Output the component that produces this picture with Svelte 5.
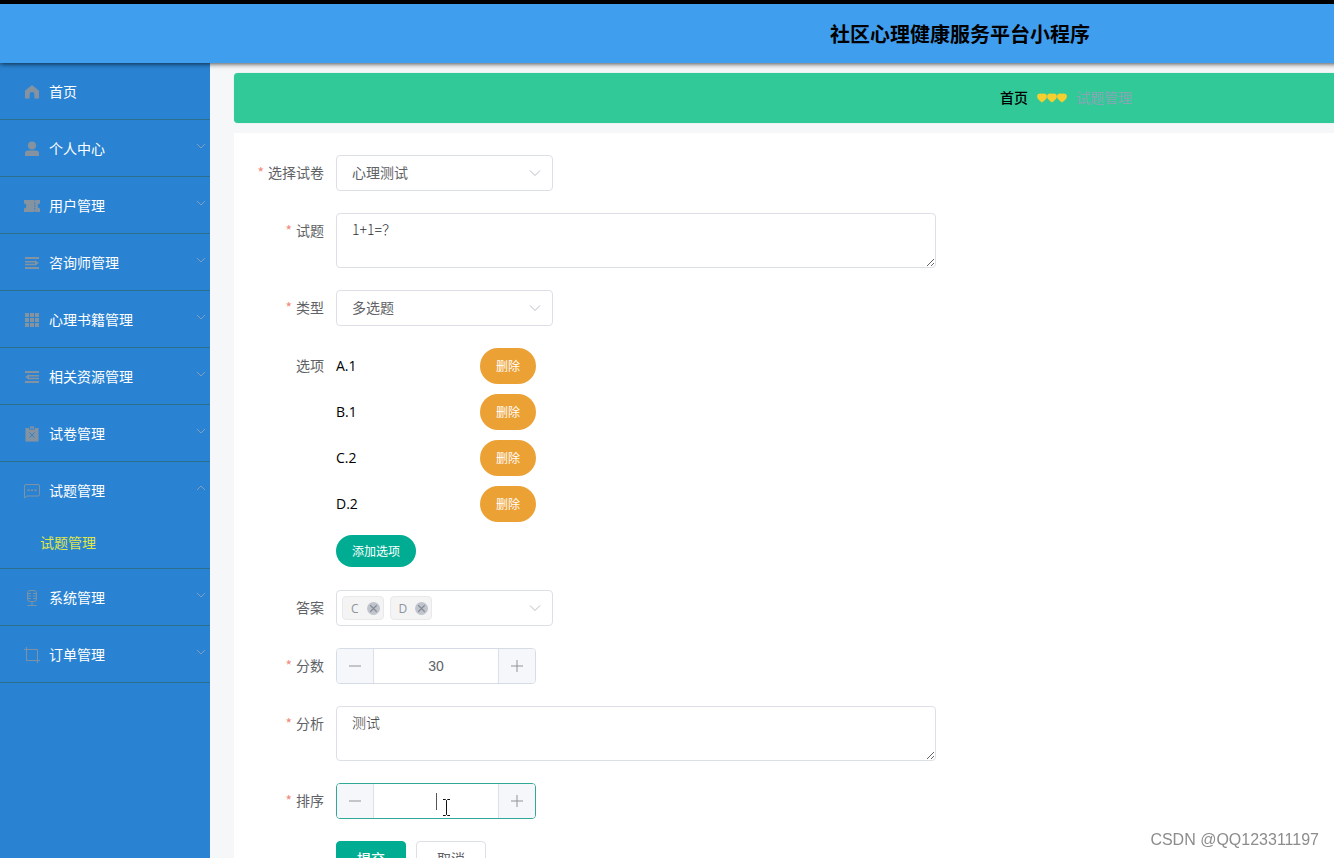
<script lang="ts">
  type MenuItem = {
    icon: string
    label: string
    open?: boolean
    children?: string[]
  }

  const menu: MenuItem[] = [
    { icon: 'home', label: '首页' },
    { icon: 'user', label: '个人中心', children: [] },
    { icon: 'ticket', label: '用户管理', children: [] },
    { icon: 'unfold', label: '咨询师管理', children: [] },
    { icon: 'grid', label: '心理书籍管理', children: [] },
    { icon: 'fold', label: '相关资源管理', children: [] },
    { icon: 'release', label: '试卷管理', children: [] },
    { icon: 'chat', label: '试题管理', open: true, children: ['试题管理'] },
    { icon: 'mic', label: '系统管理', children: [] },
    { icon: 'crop', label: '订单管理', children: [] }
  ]

  let paper = $state('心理测试')
  let question = $state('1+1=？')
  let type = $state('多选题')
  let options = $state(['1', '1', '2', '2'])
  let answers = $state(['C', 'D'])
  let score = $state('30')
  let analysis = $state('测试')
  let sort = $state('')

  const letter = (index: number) => String.fromCharCode(65 + index)
  const step = (value: string, by: number) => String(Math.max(0, Number(value) + by))
</script>

{#snippet chevron()}
  <svg class="chevron" viewBox="0 0 14 14" aria-hidden="true">
    <path d="M2 4.5 7 9.5 12 4.5" />
  </svg>
{/snippet}

{#snippet menuIcon(name: string)}
  <svg class="menu-icon" viewBox="0 0 16 16" aria-hidden="true">
    {#if name === 'home'}
      <path d="M8 1 15 6.8V14.6H10.4V10.4a2.4 2.4 0 0 0-4.8 0v4.2H1V6.8z" />
    {:else if name === 'user'}
      <circle cx="8" cy="4.6" r="4" />
      <path d="M1 15v-2.4A3 3 0 0 1 4 9.6h8a3 3 0 0 1 3 3V15z" />
    {:else if name === 'ticket'}
      <path d="M0 2h10l.8 1 .8-1H16v3.6a2.4 2.4 0 0 0 0 4.8V14h-4.4l-.8-1-.8 1H0v-3.6a2.4 2.4 0 0 0 0-4.8z" />
      <path class="cut" d="M10.8 4.4v1.8M10.8 7.1v1.8M10.8 9.8v1.8" />
    {:else if name === 'unfold'}
      <path d="M1 2h14v2H1zM1 6h10v1.4H1zM1 8.8h10v1.4H1zM1 12h14v2H1zM11 5.2 14.8 8 11 10.8z" />
    {:else if name === 'fold'}
      <path d="M1 2h14v2H1zM5 6h10v1.4H5zM5 8.8h10v1.4H5zM1 12h14v2H1zM5 5.2 1.2 8 5 10.8z" />
    {:else if name === 'grid'}
      <path d="M1 1h4v4H1zM6 1h4v4H6zM11 1h4v4h-4zM1 6h4v4H1zM6 6h4v4H6zM11 6h4v4h-4zM1 11h4v4H1zM6 11h4v4H6zM11 11h4v4h-4z" />
    {:else if name === 'release'}
      <path d="M1.5 2H5v1.4h6V2h3.5v13.4h-13zM5.8.6h4.4v1.8H5.8z" />
      <path class="cut" d="m5.4 6.4 5.2 5.4M10.6 6.4l-5.2 5.4" />
    {:else if name === 'chat'}
      <path class="line" d="M.5 15V3A1.5 1.5 0 0 1 2 1.5h12A1.5 1.5 0 0 1 15.500 3v8.500A1.500 1.500 0 0 1 14 13H3z" />
      <path d="M3.500 6.500h2v1.500h-2zM7 6.500h2v1.500H7zM10.500 6.500h2v1.500h-2z" />
    {:else if name === 'mic'}
      <rect class="line" x="3.500" y=".5" width="9" height="11" rx="2.500" />
      <path class="line" d="M4 3.500h3M9 3.500h3M4 6h3M9 6h3M4 8.500h3M9 8.500h3M8 11.500v4M3.500 15.500h9" />
    {:else if name === 'crop'}
      <path class="line" d="M2.500 0v13.500H16M0 2.500h13.500V16" />
    {/if}
  </svg>
{/snippet}

{#snippet stepper(id: string, value: string, change: (value: string) => void, focused: boolean)}
  <div class="stepper" class:focused>
    <button type="button" aria-label="减少" onclick={() => change(step(value, -1))}>
      <svg viewBox="0 0 14 14" aria-hidden="true"><path d="M1 7h12" /></svg>
    </button>
    <div class="stepper-field">
      <input {id} type="text" inputmode="numeric" {value} oninput={(e) => change(e.currentTarget.value)} />
      {#if focused}
        <span class="caret"></span>
        <svg class="pointer" viewBox="0 0 9 17" aria-hidden="true">
          <path d="M1 .5h2.500l1 1 1-1H8M4.500 1.500v14M1 16.500h2.500l1-1 1 1H8" />
        </svg>
      {/if}
    </div>
    <button type="button" aria-label="增加" onclick={() => change(step(value, 1))}>
      <svg viewBox="0 0 14 14" aria-hidden="true"><path d="M1 7h12M7 1v12" /></svg>
    </button>
  </div>
{/snippet}

<div class="viewport">
  <div class="page">
    <header class="topbar">
      <h1>社区心理健康服务平台小程序</h1>
    </header>

    <div class="body">
      <nav class="sidebar" aria-label="主菜单">
        <ul>
          {#each menu as item}
            <li>
              <a class="menu-item" href="#menu">
                {@render menuIcon(item.icon)}
                <span>{item.label}</span>
                {#if item.children}
                  <svg class="menu-arrow" class:up={item.open} viewBox="0 0 12 12" aria-hidden="true">
                    <path d="M2 4 6 8 10 4" />
                  </svg>
                {/if}
              </a>
              {#if item.open}
                {#each item.children ?? [] as child}
                  <a class="submenu-item" href="#menu">{child}</a>
                {/each}
              {/if}
            </li>
          {/each}
        </ul>
      </nav>

      <main>
        <div class="breadcrumb">
          <a href="#home">首页</a>
          <svg class="hearts" viewBox="0 0 30 10" aria-hidden="true">
            {#each [0, 10, 20] as x}
              <path d="M{x + 5} 9.600C{x + 3.6} 8.200 {x + 0.1} 6.600 {x + 0.1} 3.300 {x + 0.1} .4 {x + 3.8} .2 {x + 5} 1 {x + 6.2} .2 {x + 9.9} .4 {x + 9.9} 3.300 {x + 9.9} 6.600 {x + 6.4} 8.200 {x + 5} 9.600z" />
            {/each}
          </svg>
          <span>试题管理</span>
        </div>

        <form class="card">
          <div class="row">
            <label class="required" for="paper">选择试卷</label>
            <div class="select">
              <select id="paper" bind:value={paper}>
                <option>心理测试</option>
              </select>
              {@render chevron()}
            </div>
          </div>

          <div class="row">
            <label class="required" for="question">试题</label>
            <textarea id="question" bind:value={question}></textarea>
          </div>

          <div class="row">
            <label class="required" for="type">类型</label>
            <div class="select">
              <select id="type" bind:value={type}>
                <option>单选题</option>
                <option>多选题</option>
              </select>
              {@render chevron()}
            </div>
          </div>

          <div class="row">
            <span class="label">选项</span>
            <div class="options">
              {#each options as option, index}
                <div class="option">
                  <span>{letter(index)}.{option}</span>
                  <button type="button" class="pill warning" onclick={() => options.splice(index, 1)}>删除</button>
                </div>
              {/each}
              <div class="option-add">
                <button type="button" class="pill primary" onclick={() => options.push('')}>添加选项</button>
              </div>
            </div>
          </div>

          <div class="row">
            <span class="label">答案</span>
            <div class="select tags">
              {#each answers as answer}
                <span class="tag">
                  {answer}
                  <button type="button" aria-label="移除 {answer}" onclick={() => (answers = answers.filter((a) => a !== answer))}>
                    <svg viewBox="0 0 12 12" aria-hidden="true"><path d="m3 3 6 6M9 3 3 9" /></svg>
                  </button>
                </span>
              {/each}
              {@render chevron()}
            </div>
          </div>

          <div class="row">
            <label class="required" for="score">分数</label>
            {@render stepper('score', score, (v) => (score = v), false)}
          </div>

          <div class="row">
            <label class="required" for="analysis">分析</label>
            <textarea id="analysis" bind:value={analysis}></textarea>
          </div>

          <div class="row">
            <label class="required" for="sort">排序</label>
            {@render stepper('sort', sort, (v) => (sort = v), true)}
          </div>

          <div class="row">
            <span class="label"></span>
            <div class="actions">
              <button type="button" class="action submit">提交</button>
              <button type="button" class="action">取消</button>
            </div>
          </div>
        </form>
      </main>
    </div>
  </div>

  <div class="watermark">CSDN @QQ123311197</div>
</div>

<style>
  :global(body) {
    background: #f5f7f9;
    font-family: 'Noto Sans CJK SC', sans-serif;
    font-size: 14px;
  }

  .viewport {
    height: 100vh;
    overflow: hidden;
  }

  .page {
    display: flex;
    flex-direction: column;
    min-width: 1920px;
    min-height: 100%;
    box-sizing: border-box;
    border-top: 4px solid #000;
  }

  .topbar {
    display: flex;
    align-items: center;
    justify-content: center;
    height: 59px;
    background: #409eef;
    box-shadow: 0 1px 5px rgba(0, 0, 0, 0.7);
    z-index: 1;
  }

  h1 {
    margin: 0;
    color: #000;
    font-size: 20px;
    font-weight: 700;
    line-height: 30px;
  }

  .body {
    display: flex;
    flex: 1;
  }

  .sidebar {
    flex: 0 0 210px;
    background: #2a83d2;
  }

  .sidebar ul {
    margin: 0;
    padding: 0;
    list-style: none;
  }

  .sidebar li {
    border-bottom: 1px solid #2a6f8c;
  }

  .menu-item {
    display: flex;
    align-items: center;
    gap: 9px;
    height: 56px;
    padding: 0 4px 0 24px;
    color: #fff;
    text-decoration: none;
  }

  .menu-item span {
    padding-bottom: 1px;
  }

  .menu-icon {
    width: 16px;
    height: 16px;
    margin-top: 2px;
    fill: #8593a0;
  }

  .menu-icon .line {
    fill: none;
    stroke: #7e92a6;
  }

  .menu-icon .cut {
    fill: none;
    stroke: #2a83d2;
  }

  .menu-arrow {
    width: 12px;
    height: 12px;
    margin: 0 -1px 4px auto;
    fill: none;
    stroke: #7f9fbc;
  }

  .menu-arrow.up {
    transform: rotate(180deg);
  }

  .submenu-item {
    display: block;
    padding: 0 0 2px 40px;
    color: #dfe64a;
    line-height: 48px;
    text-decoration: none;
  }

  main {
    display: flex;
    flex: 1;
    flex-direction: column;
    gap: 10px;
    padding: 10px 0 0 24px;
  }

  .breadcrumb {
    display: flex;
    align-items: center;
    justify-content: center;
    gap: 9px;
    height: 50px;
    padding-right: 22px;
    border-radius: 4px;
    background: #32c998;
    box-shadow: 0 0 1px #7fd9bb;
  }

  .breadcrumb a {
    padding-bottom: 2px;
    color: #000;
    font-weight: 500;
    text-decoration: none;
  }

  .breadcrumb span {
    padding-bottom: 2px;
    color: #86a6b4;
  }

  .hearts {
    width: 30px;
    height: 10px;
    fill: #f5cf2f;
  }

  .card {
    display: flex;
    flex: 1;
    flex-direction: column;
    gap: 22px;
    padding: 22px;
    background: #fff;
  }

  .row {
    display: flex;
    align-items: flex-start;
  }

  label,
  .label {
    flex: 0 0 80px;
    box-sizing: border-box;
    padding-right: 12px;
    color: #606266;
    line-height: 34px;
    text-align: right;
    white-space: nowrap;
  }

  .required::before {
    margin-right: 4px;
    color: #f08a7c;
    content: '*';
  }

  select,
  textarea,
  input,
  button {
    font-family: inherit;
    font-size: 14px;
  }

  .select {
    display: flex;
    align-items: center;
    position: relative;
    box-sizing: border-box;
    width: 217px;
    height: 36px;
    border: 1px solid #dcdfe6;
    border-radius: 4px;
    background: #fff;
  }

  select {
    width: 100%;
    height: 100%;
    padding: 0 30px 2px 15px;
    border: 0;
    border-radius: 4px;
    outline: 0;
    appearance: none;
    background: none;
    color: #606266;
  }

  .chevron {
    position: absolute;
    right: 10px;
    width: 14px;
    height: 14px;
    fill: none;
    stroke: #b9bdc5;
    pointer-events: none;
  }

  textarea {
    box-sizing: border-box;
    width: 600px;
    height: 55px;
    padding: 5px 15px;
    border: 1px solid #dcdfe6;
    border-radius: 4px;
    outline: 0;
    color: #303133;
    font-weight: 300;
    line-height: 21px;
    resize: vertical;
  }

  .option {
    display: flex;
    align-items: center;
    justify-content: space-between;
    width: 200px;
    height: 36px;
    margin-bottom: 10px;
    color: #000;
    font-family: 'Open Sans', 'Noto Sans CJK SC', sans-serif;
  }

  .option span {
    padding-bottom: 2px;
  }

  .option-add {
    display: flex;
    align-items: flex-end;
    height: 35px;
    padding-bottom: 1px;
  }

  .pill {
    height: 32px;
    padding: 0 16px 2px;
    border: 0;
    border-radius: 18px;
    color: #fff;
    font-family: 'Noto Sans CJK SC', sans-serif;
    font-size: 12px;
  }

  .warning {
    height: 36px;
    background: #eca135;
  }

  .primary {
    background: #00ad92;
  }

  .tags {
    gap: 6px;
    padding-left: 5px;
  }

  .tag {
    display: flex;
    align-items: center;
    gap: 8px;
    box-sizing: border-box;
    height: 24px;
    padding: 0 3px 0 8px;
    border: 1px solid #e9e9eb;
    border-radius: 4px;
    background: #f4f4f5;
    color: #909399;
    font-family: 'Open Sans', sans-serif;
    font-size: 12px;
  }

  .tag button {
    display: flex;
    width: 13px;
    height: 13px;
    padding: 0;
    border: 0;
    border-radius: 50%;
    background: #c0c4cc;
  }

  .tag svg {
    width: 13px;
    height: 13px;
    fill: none;
    stroke: #858a92;
  }

  .stepper {
    display: flex;
    box-sizing: border-box;
    width: 200px;
    height: 36px;
    border: 1px solid #d5dce6;
    border-radius: 4px;
    background: #fff;
  }

  .stepper.focused {
    border-color: #2fa897;
  }

  .stepper > button {
    display: flex;
    flex: 0 0 37px;
    align-items: center;
    justify-content: center;
    padding: 0;
    border: 0;
    border-right: 1px solid #dcdfe6;
    border-radius: 3px 0 0 3px;
    background: #f5f7fa;
  }

  .stepper > button:last-child {
    border-right: 0;
    border-left: 1px solid #dcdfe6;
    border-radius: 0 3px 3px 0;
  }

  .stepper > button svg {
    width: 14px;
    height: 14px;
    fill: none;
    stroke: #909399;
  }

  .stepper-field {
    flex: 1;
    position: relative;
    min-width: 0;
  }

  .stepper input {
    box-sizing: border-box;
    width: 100%;
    height: 100%;
    padding: 0;
    border: 0;
    outline: 0;
    background: none;
    color: #606266;
    font-family: 'Liberation Sans', sans-serif;
    text-align: center;
  }

  .caret {
    position: absolute;
    top: 9px;
    left: 50%;
    width: 1px;
    height: 17px;
    background: #555;
  }

  .pointer {
    position: absolute;
    top: 15px;
    left: 68px;
    width: 9px;
    height: 17px;
    fill: none;
    stroke: #111;
  }

  .actions {
    display: flex;
    gap: 10px;
  }

  .action {
    box-sizing: border-box;
    width: 70px;
    height: 36px;
    padding: 0 0 2px;
    border: 1px solid #dcdfe6;
    border-radius: 4px;
    background: #fff;
    color: #606266;
  }

  .action.submit {
    border-color: #00ad92;
    background: #00ad92;
    color: #fff;
    font-weight: 500;
  }

  .watermark {
    position: fixed;
    right: 15px;
    bottom: 6px;
    color: #8c8c8c;
    font-family: 'Liberation Sans', sans-serif;
    font-size: 16px;
    line-height: 24px;
  }
</style>
